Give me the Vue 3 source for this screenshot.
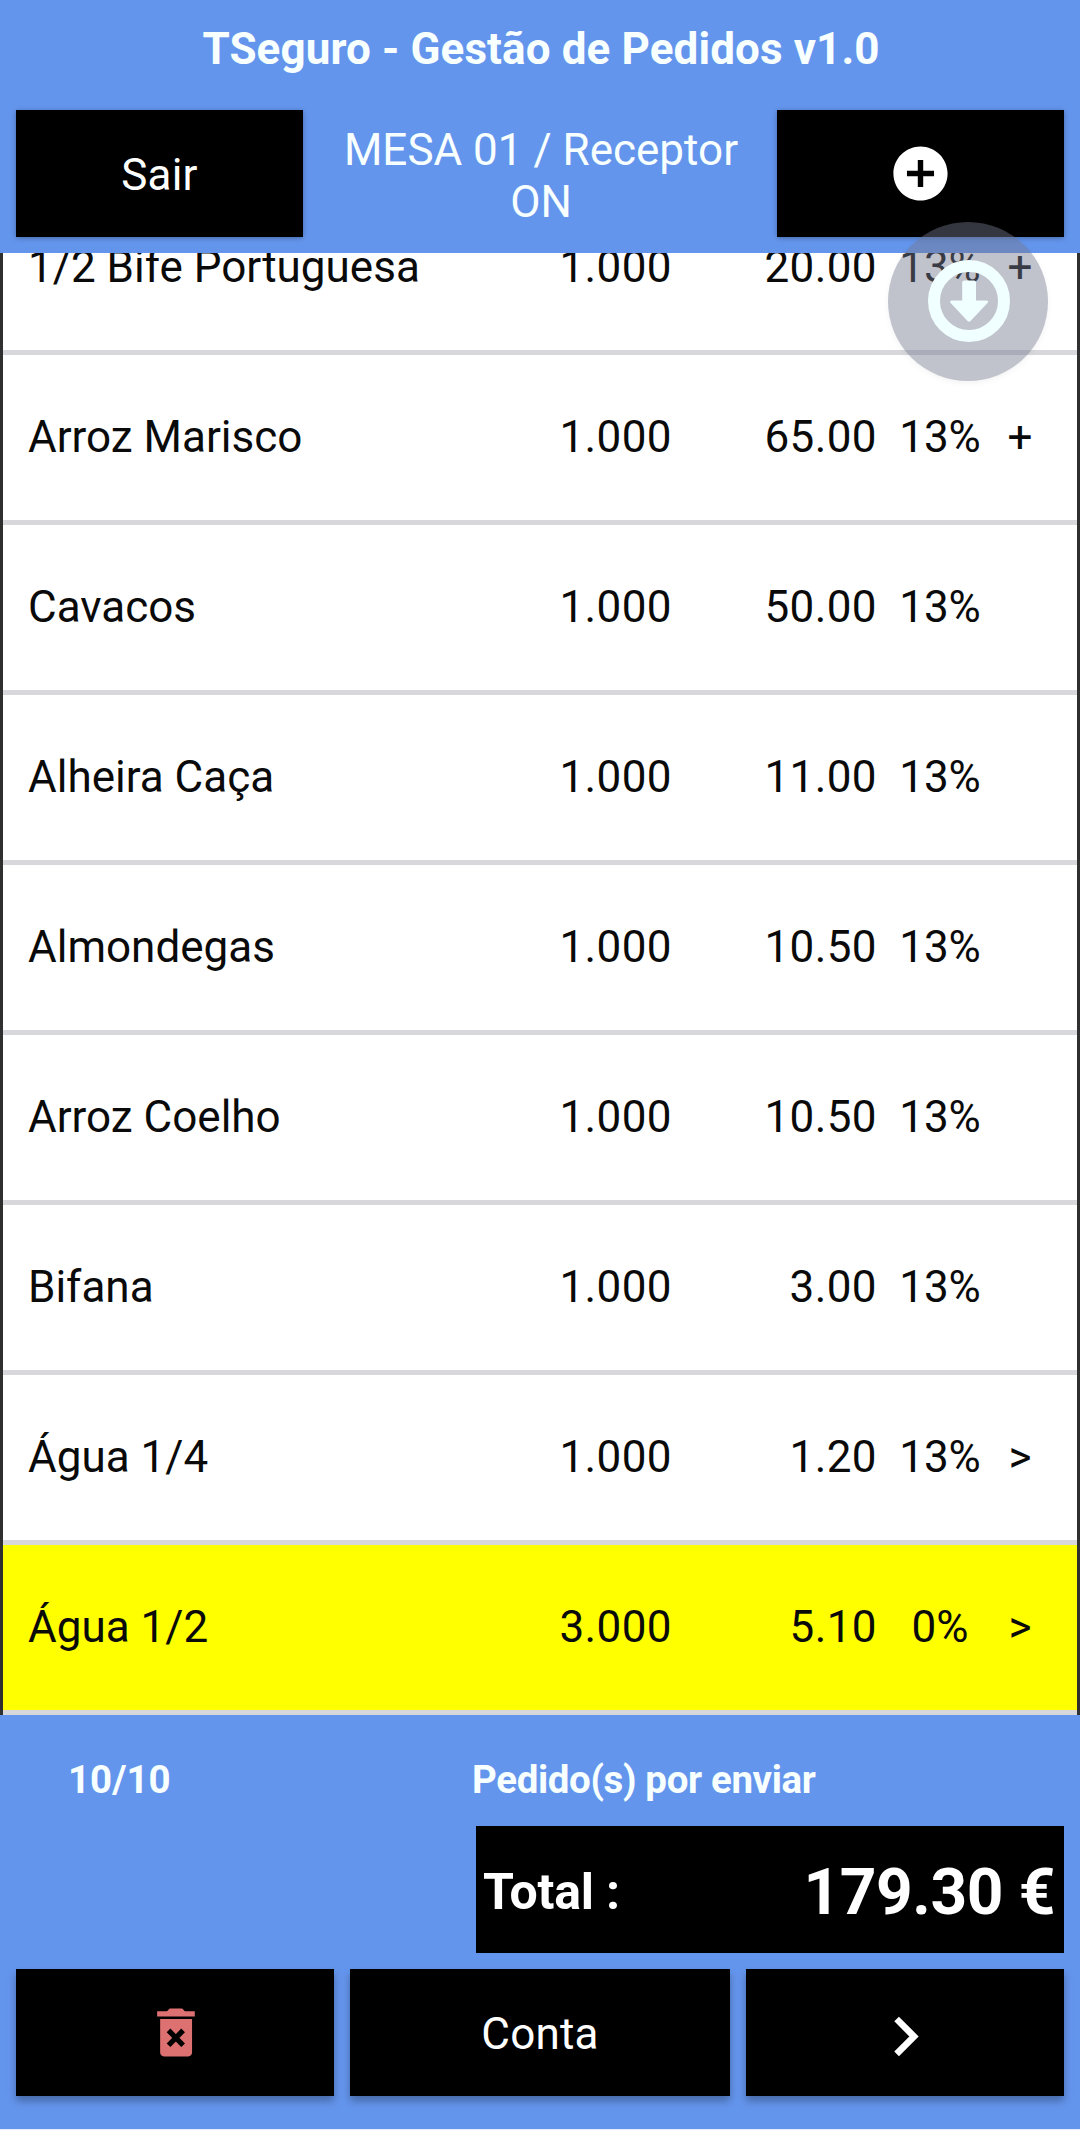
<template>
    <div class="page">
        <!-- header -->
        <header class="header">
            <h1 class="title">TSeguro - Gestão de Pedidos v1.0</h1>

            <div class="toolbar">
                <button class="btn low">Sair</button>
                <div class="table-name">MESA 01 / Receptor ON</div>
                <button class="btn low" @click="addItem">
                    <svg class="icon add" viewBox="0 0 24 24">
                        <path fill="#fff" d="M12 2C6.48 2 2 6.48 2 12s4.48 10 10 10 10-4.48 10-10S17.52 2 12 2zm5 11h-4v4h-2v-4H7v-2h4V7h2v4h4v2z" />
                    </svg>
                </button>
            </div>
        </header>

        <!-- order list -->
        <main class="list">
            <div v-for="(item, i) in items" :key="item.name" class="row" :class="{ selected: i === selected }"
                @click="selected = i">
                <span class="name">{{ item.name }}</span>
                <span class="qty">{{ item.qty.toFixed(3) }}</span>
                <span class="price">{{ item.price.toFixed(2) }}</span>
                <span class="tax">{{ item.tax }}%</span>
                <span class="mark">{{ item.mark }}</span>
            </div>
        </main>

        <!-- footer -->
        <footer class="footer">
            <div class="status">
                <span class="count">10/10</span>
                <span class="pending">Pedido(s) por enviar</span>
            </div>

            <div class="total">
                <span class="total-label">Total :</span>
                <span class="total-value">179.30 €</span>
            </div>

            <div class="actions">
                <button class="btn">
                    <svg class="icon" viewBox="0 0 24 24">
                        <path fill="#dd7070" d="M5.5 4.100h3.500c.5 0 .6-1 1.200-1h4.300c.6 0 .7 1 1.200 1h3.500v1.900H5.500zM6.600 6.900h11.600v12.200c0 .8-.6 1.400-1.400 1.400H8c-.8 0-1.400-.6-1.400-1.400z" />
                        <path stroke="#000" stroke-width="1.9" d="M9.650 11.050l5.300 5.400M14.950 11.050l-5.300 5.400" />
                    </svg>
                </button>
                <button class="btn">Conta</button>
                <button class="btn">
                    <svg class="icon next" viewBox="0 0 24 24">
                        <path fill="#fff" d="M8.590 17.790 13.170 13.200 8.590 8.610 10 7.200l6 6-6 6z" />
                    </svg>
                </button>
            </div>
        </footer>

        <!-- floating scroll button -->
        <button class="fab">
            <svg viewBox="0 0 82 82">
                <circle cx="41" cy="41" r="35" fill="none" stroke="#f0ffff" stroke-width="12" />
                <path fill="#f0ffff" d="M36 20.500h10q2 0 2 2v18h10q3.500 0 1.500 2.500L42.500 61q-1.500 1.500-3 0L22.700 43q-2-2.500 1.500-2.500h10v-18q0-2 2-2z" />
            </svg>
        </button>
    </div>
</template>

<script setup>
import { ref } from "vue";

const selected = ref(8);

const items = ref([
    { name: "1/2 Bife Portuguesa", qty: 1, price: 20, tax: 13, mark: "+" },
    { name: "Arroz Marisco", qty: 1, price: 65, tax: 13, mark: "+" },
    { name: "Cavacos", qty: 1, price: 50, tax: 13, mark: "" },
    { name: "Alheira Caça", qty: 1, price: 11, tax: 13, mark: "" },
    { name: "Almondegas", qty: 1, price: 10.5, tax: 13, mark: "" },
    { name: "Arroz Coelho", qty: 1, price: 10.5, tax: 13, mark: "" },
    { name: "Bifana", qty: 1, price: 3, tax: 13, mark: "" },
    { name: "Água 1/4", qty: 1, price: 1.2, tax: 13, mark: ">" },
    { name: "Água 1/2", qty: 3, price: 5.1, tax: 0, mark: ">" },
]);

const addItem = () => {
    selected.value = items.value.length - 1;
};
</script>

<style>
body {
    margin: 0;
}
</style>

<style scoped>
* {
    box-sizing: border-box;
}

.page {
    position: relative;
    width: 1080px;
    height: 2130px;
    overflow: hidden;
    display: flex;
    flex-direction: column;
    background: #e4ecfb;
    color: #fff;
    font-family: Roboto, sans-serif;
    font-size: 44px;
}

/* header */
.header {
    height: 253px;
    background: #6495ed;
}

.title {
    height: 110px;
    margin: 0;
    padding: 23px 0 0 2px;
    font-size: 44px;
    line-height: 52px;
    font-weight: 700;
    letter-spacing: 0.1px;
    text-align: center;
    color: #f7ffff;
}

.toolbar {
    display: grid;
    grid-template-columns: 287px 1fr 287px;
    gap: 16px;
    padding: 0 16px;
}

.table-name {
    padding: 14px 0 0 2px;
    line-height: 52px;
    text-align: center;
    color: #f7ffff;
}

.btn {
    display: flex;
    align-items: center;
    justify-content: center;
    height: 127px;
    padding: 2px 0 0;
    border: none;
    background: #000;
    color: #fff;
    font-family: inherit;
    font-size: 44px;
    letter-spacing: 0.2px;
    box-shadow: 0 5px 8px rgba(0, 0, 0, 0.3);
}

.btn.low {
    box-shadow: 0 1px 5px rgba(0, 0, 0, 0.3);
}

.icon {
    display: block;
    width: 66px;
    height: 66px;
    margin-top: -2px;
}

.icon.add {
    width: 65px;
    height: 65px;
    margin-top: -3px;
}

.icon.next {
    width: 79px;
    height: 79px;
}

/* list, scrolled so that the first row is cut by the header */
.list {
    height: 1462px;
    display: flex;
    flex-direction: column;
    justify-content: flex-end;
    overflow: hidden;
    background: #fff;
    border-left: 3px solid #2f2f2f;
    border-right: 3px solid #2f2f2f;
}

.row {
    flex: none;
    height: 170px;
    display: grid;
    grid-template-columns: 496px 148px 205px 110px 60px;
    align-items: center;
    padding: 0 0 2px 25px;
    border-bottom: 5px solid #d8d8dc;
    color: #0a0a0a;
}

.row.selected {
    background: #ffff00;
    background-clip: padding-box;
}

.qty,
.price {
    text-align: right;
    letter-spacing: 0.4px;
}

.tax,
.mark {
    text-align: center;
}

.tax {
    padding-left: 16px;
}

.mark {
    padding-left: 6px;
}

/* footer */
.footer {
    height: 414px;
    background: #6495ed;
}

.status {
    height: 111px;
    display: grid;
    grid-template-columns: 404px 1fr;
    align-items: center;
    padding: 18px 0 0 68px;
    font-size: 38.5px;
    font-weight: 700;
    color: #f7ffff;
}

.pending {
    letter-spacing: -0.36px;
}

.total {
    display: flex;
    align-items: baseline;
    justify-content: space-between;
    height: 127px;
    margin: 0 16px 16px 476px;
    padding: 29px 9px 0 7px;
    background: #000;
    font-weight: 700;
}

.total-label {
    position: relative;
    top: -5px;
    font-size: 50px;
    letter-spacing: -0.2px;
}

.total-value {
    font-size: 64px;
    letter-spacing: -0.4px;
}

.actions {
    display: grid;
    grid-template-columns: 318px 380px 318px;
    gap: 16px;
    padding: 0 16px;
}

/* scroll button */
.fab {
    position: absolute;
    left: 888px;
    top: 222px;
    width: 160px;
    height: 159px;
    display: flex;
    align-items: center;
    justify-content: center;
    padding: 0 0 1px 2px;
    border: none;
    border-radius: 50%;
    background: rgba(116, 120, 142, 0.45);
    box-shadow: 0 2px 6px rgba(0, 0, 0, 0.05);
}

.fab svg {
    width: 82px;
    height: 82px;
}
</style>
